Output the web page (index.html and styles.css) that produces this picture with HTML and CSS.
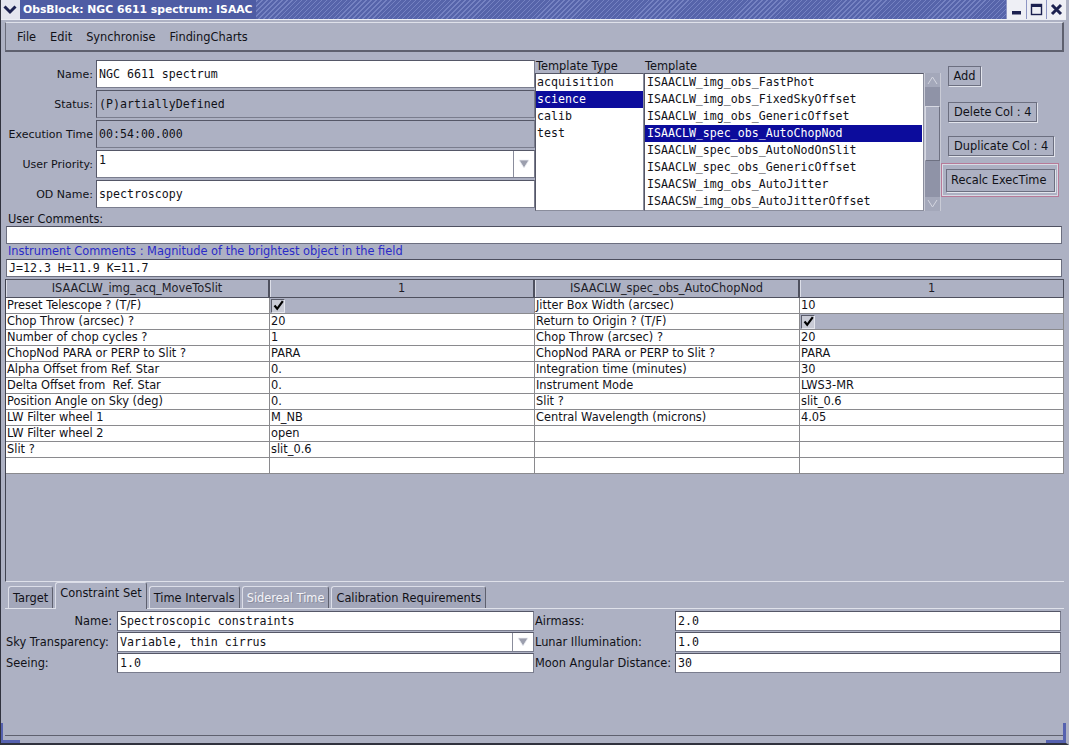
FILE: index.html
```html
<!DOCTYPE html>
<html>
<head>
<meta charset="utf-8">
<title>ObsBlock: NGC 6611 spectrum: ISAAC</title>
<link rel="stylesheet" href="styles.css">
</head>
<body>
<div class="win">
  <div class="titlebar">
    <div class="wm-menu">
      <svg width="20" height="19" viewBox="0 0 20 19"><polyline points="4.5,6.5 10,12 15.5,6.5" fill="none" stroke="#1c2150" stroke-width="3"/></svg>
    </div>
    <div class="title">ObsBlock: NGC 6611 spectrum: ISAAC</div>
    <div class="title-fill"></div>
    <div class="wbtn">
      <svg width="19" height="19" viewBox="0 0 19 19"><rect x="5" y="11" width="9" height="3.5" fill="#1c2150"/></svg>
    </div>
    <div class="wbtn">
      <svg width="19" height="19" viewBox="0 0 19 19"><rect x="4.5" y="4.5" width="10" height="10" fill="none" stroke="#1c2150" stroke-width="1.4"/><rect x="4" y="4" width="11" height="3" fill="#1c2150"/></svg>
    </div>
    <div class="wbtn">
      <svg width="19" height="19" viewBox="0 0 19 19"><path d="M5 5 L14 14 M14 5 L5 14" stroke="#1c2150" stroke-width="3"/></svg>
    </div>
  </div>

  <div class="frame">
    <div class="menubar">
      <span>File</span><span>Edit</span><span>Synchronise</span><span>FindingCharts</span>
    </div>

    <div class="top">
      <div class="obform">
        <div class="row"><div class="lbl">Name:</div><div class="fld">NGC 6611 spectrum</div></div>
        <div class="row"><div class="lbl">Status:</div><div class="fld ro">(P)artiallyDefined</div></div>
        <div class="row"><div class="lbl">Execution Time</div><div class="fld ro">00:54:00.000</div></div>
        <div class="row"><div class="lbl">User Priority:</div>
          <div class="fld combo top-text"><span class="cval">1</span><span class="arrow"><svg width="12" height="10" viewBox="0 0 12 10"><path d="M1 1 L11 1 L6 9 Z" fill="#9c9fae" stroke="#eeeff4" stroke-width="0.8"/></svg></span></div>
        </div>
        <div class="row"><div class="lbl">OD Name:</div><div class="fld">spectroscopy</div></div>
      </div>

      <div class="ttype">
        <div class="collbl">Template Type</div>
        <div class="list">
          <div class="item">acquisition</div>
          <div class="item sel">science</div>
          <div class="item">calib</div>
          <div class="item">test</div>
        </div>
      </div>

      <div class="tmpl">
        <div class="collbl">Template</div>
        <div class="tmpl-body">
          <div class="list wide">
            <div class="item">ISAACLW_img_obs_FastPhot</div>
            <div class="item">ISAACLW_img_obs_FixedSkyOffset</div>
            <div class="item">ISAACLW_img_obs_GenericOffset</div>
            <div class="item sel">ISAACLW_spec_obs_AutoChopNod</div>
            <div class="item">ISAACLW_spec_obs_AutoNodOnSlit</div>
            <div class="item">ISAACLW_spec_obs_GenericOffset</div>
            <div class="item">ISAACSW_img_obs_AutoJitter</div>
            <div class="item">ISAACSW_img_obs_AutoJitterOffset</div>
          </div>
          <div class="vscroll">
            <div class="sarrow"><svg width="15" height="12" viewBox="0 0 15 12"><path d="M3 10 L7.5 3 L12 10" fill="none" stroke="#d4d6e0" stroke-width="1"/></svg></div>
            <div class="strack">
              <div class="sthumb"></div>
            </div>
            <div class="sarrow"><svg width="15" height="12" viewBox="0 0 15 12"><path d="M3 2 L7.5 9 L12 2" fill="none" stroke="#d4d6e0" stroke-width="1"/></svg></div>
          </div>
        </div>
      </div>

      <div class="btns">
        <div class="btn b-add">Add</div>
        <div class="btn b-del">Delete Col : 4</div>
        <div class="btn b-dup">Duplicate Col : 4</div>
        <div class="focus"><div class="btn b-rec">Recalc ExecTime</div></div>
      </div>
    </div>

    <div class="clbl">User Comments:</div>
    <div class="tf"></div>
    <div class="clbl blue">Instrument Comments : Magnitude of the brightest object in the field</div>
    <div class="tf">J=12.3 H=11.9 K=11.7</div>

    <div class="tblwrap">
      <div class="grid">
        <div class="th">ISAACLW_img_acq_MoveToSlit</div>
        <div class="th">1</div>
        <div class="th">ISAACLW_spec_obs_AutoChopNod</div>
        <div class="th last">1</div>

        <div class="td">Preset Telescope ? (T/F)</div><div class="td chk"><span class="cb"><svg width="11" height="11" viewBox="0 0 11 11"><path d="M1.5 5.5 L4.2 8.8 L9.8 1.2" fill="none" stroke="#000" stroke-width="2.2"/></svg></span></div>
        <div class="td">Jitter Box Width (arcsec)</div><div class="td">10</div>

        <div class="td">Chop Throw (arcsec) ?</div><div class="td">20</div>
        <div class="td">Return to Origin ? (T/F)</div><div class="td chk"><span class="cb"><svg width="11" height="11" viewBox="0 0 11 11"><path d="M1.5 5.5 L4.2 8.8 L9.8 1.2" fill="none" stroke="#000" stroke-width="2.2"/></svg></span></div>

        <div class="td">Number of chop cycles ?</div><div class="td">1</div>
        <div class="td">Chop Throw (arcsec) ?</div><div class="td">20</div>

        <div class="td">ChopNod PARA or PERP to Slit ?</div><div class="td">PARA</div>
        <div class="td">ChopNod PARA or PERP to Slit ?</div><div class="td">PARA</div>

        <div class="td">Alpha Offset from Ref. Star</div><div class="td">0.</div>
        <div class="td">Integration time (minutes)</div><div class="td">30</div>

        <div class="td">Delta Offset from  Ref. Star</div><div class="td">0.</div>
        <div class="td">Instrument Mode</div><div class="td">LWS3-MR</div>

        <div class="td">Position Angle on Sky (deg)</div><div class="td">0.</div>
        <div class="td">Slit ?</div><div class="td">slit_0.6</div>

        <div class="td">LW Filter wheel 1</div><div class="td">M_NB</div>
        <div class="td">Central Wavelength (microns)</div><div class="td">4.05</div>

        <div class="td">LW Filter wheel 2</div><div class="td">open</div>
        <div class="td"></div><div class="td"></div>

        <div class="td">Slit ?</div><div class="td">slit_0.6</div>
        <div class="td"></div><div class="td"></div>

        <div class="td"></div><div class="td"></div>
        <div class="td"></div><div class="td"></div>
      </div>
    </div>

    <div class="tabs">
      <div class="tab">Target</div>
      <div class="tab active">Constraint Set</div>
      <div class="tab">Time Intervals</div>
      <div class="tab disabled">Sidereal Time</div>
      <div class="tab">Calibration Requirements</div>
    </div>
    <div class="tabpanel">
      <div class="cform">
        <div class="crow"><div class="clab right">Name:</div><div class="cf">Spectroscopic constraints</div></div>
        <div class="crow"><div class="clab">Sky Transparency:</div>
          <div class="cf combo"><span class="cval">Variable, thin cirrus</span><span class="arrow"><svg width="12" height="10" viewBox="0 0 12 10"><path d="M1 1 L11 1 L6 9 Z" fill="#9c9fae" stroke="#eeeff4" stroke-width="0.8"/></svg></span></div>
        </div>
        <div class="crow"><div class="clab">Seeing:</div><div class="cf">1.0</div></div>
      </div>
      <div class="cform second">
        <div class="crow"><div class="clab">Airmass:</div><div class="cf">2.0</div></div>
        <div class="crow"><div class="clab">Lunar Illumination:</div><div class="cf">1.0</div></div>
        <div class="crow"><div class="clab">Moon Angular Distance:</div><div class="cf">30</div></div>
      </div>
    </div>
  </div>
  <div class="corner left"></div>
  <div class="corner right"></div>
</div>
</body>
</html>
```
FILE: styles.css
```css
* { box-sizing: border-box; }

body {
  margin: 0;
  background: #adb1c3;
}

.win {
  position: relative;
  width: 1069px;
  height: 745px;
  overflow: hidden;
  display: flex;
  flex-direction: column;
  background: #adb1c3;
  border-left: 1px solid #30323e;
  border-right: 3px solid #adb1c3;
  border-bottom: 2px solid #30323e;
  font-family: "DejaVu Sans", sans-serif;
  font-size: 11.4px;
  color: #111118;
}

/* ---- window title bar ---- */
.titlebar {
  height: 20px;
  flex: none;
  display: flex;
  background: repeating-linear-gradient(135deg, #5664aa 0 2.5px, #7582c2 2.5px 3.5px);
  border-bottom: 1px solid #eceef4;
}
.wm-menu {
  width: 20px;
  margin-left: -1px;
  background: #e4e5ee;
  display: flex;
  align-items: center;
  justify-content: center;
}
.title {
  background: #4e5ca4;
  color: #fff;
  font-weight: bold;
  font-size: 10.8px;
  line-height: 20px;
  padding: 0 3px 0 3px;
}
.title-fill { flex: 1; }
.wbtn {
  width: 20px;
  background: #eeeff5;
  border-left: 1px solid #8d95c4;
  display: flex;
  align-items: center;
  justify-content: center;
}

/* ---- frame contents ---- */
.frame {
  flex: 1;
  display: flex;
  flex-direction: column;
  padding: 1px 0 0 4px;
  width: 1063px;
}

.menubar {
  height: 30px;
  flex: none;
  margin-top: 1px;
  display: flex;
  align-items: center;
  gap: 14px;
  padding-left: 11px;
  border-top: 1px solid #dfe1ea;
  border-left: 1px solid #6a6c7a;
  border-bottom: 2px solid #5e606e;
  border-right: 2px solid #5e606e;
}

.top {
  height: 155px;
  flex: none;
  margin-top: 4px;
  display: flex;
}

.obform {
  width: 530px;
  padding-top: 4px;
  display: flex;
  flex-direction: column;
  gap: 2px;
}
.row {
  display: flex;
  align-items: center;
  height: 28px;
}
.lbl {
  width: 91px;
  text-align: right;
  padding-right: 3px;
  white-space: nowrap;
  font-size: 11px;
}
.fld {
  flex: 1;
  height: 28px;
  display: flex;
  align-items: center;
  padding-left: 2px;
  background: #fff;
  border: 1px solid #7a7d8e;
  border-top-color: #555767;
  border-left-color: #555767;
  font-family: "DejaVu Sans Mono", monospace;
  font-size: 11.6px;
  white-space: pre;
}
.fld.ro { background: #adb1c3; }
.combo { padding-right: 0; }
.combo .cval { flex: 1; }
.top-text { align-items: flex-start; }
.top-text .cval { padding-top: 2px; }
.arrow {
  width: 21px;
  align-self: stretch;
  display: flex;
  align-items: center;
  justify-content: center;
  border-left: 1px solid #8a8d9c;
  background: #fff;
}

.ttype { width: 109px; display: flex; flex-direction: column; }
.tmpl { width: 297px; display: flex; flex-direction: column; }
.collbl {
  height: 17px;
  line-height: 20px;
  padding-left: 1px;
  white-space: nowrap;
}
.list {
  flex: 1;
  background: #fff;
  border-top: 1px solid #555767;
  border-left: 1px solid #555767;
  border-right: 1px solid #8a8d9c;
  border-bottom: 1px solid #8a8d9c;
  font-family: "DejaVu Sans Mono", monospace;
  font-size: 11.6px;
  overflow: hidden;
}
.item {
  height: 17px;
  line-height: 17px;
  padding-left: 1px;
  white-space: nowrap;
}
.list.wide .item { padding-left: 2px; margin-right: 1px; }
.item.sel {
  background: #0c0c9c;
  color: #fff;
}
.tmpl-body { flex: 1; display: flex; }
.tmpl-body .list { width: 280px; flex: none; }

.vscroll {
  width: 17px;
  display: flex;
  flex-direction: column;
  background: #8f93a7;
  border-left: 1px solid #c9cbd6;
  border-right: 1px solid #c9cbd6;
}
.sarrow {
  height: 14px;
  display: flex;
  align-items: center;
  justify-content: center;
  background: #a4a8ba;
}
.strack {
  flex: 1;
  padding-top: 19px;
}
.sthumb {
  height: 55px;
  background: #a9adbf;
  border: 1px solid #d6d8e2;
  border-right-color: #6e7182;
  border-bottom-color: #6e7182;
}

.btns {
  flex: 1;
  padding-top: 10px;
  display: flex;
  flex-direction: column;
  align-items: flex-start;
}
.btn {
  height: 20px;
  line-height: 18px;
  padding: 0 5px;
  margin-left: 7px;
  border: 1px solid #6c6f80;
  box-shadow: 1px 1px 0 #e2e4ec;
  white-space: nowrap;
}
.b-add { margin-bottom: 16px; padding: 0 4.5px; }
.b-del { margin-bottom: 14px; }
.b-dup { margin-bottom: 7px; }
.focus {
  width: 118px;
  height: 34px;
  border: 1px solid #b77a98;
  padding: 5px 3px 0 4px;
  box-shadow: inset 0 0 0 1px #d8dae4;
}
.b-rec {
  margin-left: 0;
  height: 23px;
  line-height: 21px;
  width: 109px;
  padding: 0 4px;
}

.clbl {
  height: 15px;
  line-height: 17px;
  padding-left: 3px;
  white-space: nowrap;
}
.clbl.blue { color: #2a2ac8; height: 14px; line-height: 12px; margin-top: 1px; }
.tf {
  height: 18px;
  margin: 0 2px 0 1px;
  background: #fff;
  border: 1px solid #6c6f80;
  border-top-color: #4e5060;
  padding-left: 2px;
  line-height: 16px;
  font-family: "DejaVu Sans Mono", monospace;
  font-size: 11.6px;
}

/* ---- parameter table ---- */
.tblwrap {
  margin-top: 2px;
  height: 303px;
  flex: none;
  border-left: 1px solid #404250;
  border-bottom: 1px solid #dfe1ea;
}
.grid {
  display: grid;
  grid-template-columns: 264px 265px 265px 264px;
  grid-template-rows: 19px repeat(11, 16px);
}
.th {
  line-height: 16px;
  text-align: center;
  background: #adb1c3;
  border-top: 1px solid #4e505e;
  border-bottom: 1px solid #4e505e;
  border-right: 2px solid #4e505e;
  box-shadow: inset 1px 0 0 #dcdee8;
  color: #1d1d28;
  white-space: nowrap;
}
.th.last { border-right-width: 1px; }
.td {
  line-height: 15px;
  background: #fff;
  border-right: 1px solid #8a8a8e;
  border-bottom: 1px solid #8a8a8e;
  padding-left: 1px;
  white-space: pre;
  overflow: hidden;
}
.td.chk {
  background: #adb1c3;
  display: flex;
  align-items: center;
}
.cb {
  width: 14px;
  height: 14px;
  border: 1px solid #5a5c6a;
  border-right-color: #e4e6ee;
  border-bottom-color: #e4e6ee;
  background: #c9cbd6;
  display: flex;
  align-items: center;
  justify-content: center;
}

/* ---- tabs ---- */
.tabs {
  height: 26px;
  flex: none;
  display: flex;
  align-items: flex-end;
  gap: 2px;
  padding-left: 3px;
  position: relative;
  z-index: 1;
}
.tab {
  height: 22px;
  line-height: 22px;
  padding: 0 4px;
  background: #a3a7ba;
  border: 1px solid #dcdee8;
  border-right-color: #5e606e;
  border-bottom: none;
  border-radius: 3px 3px 0 0;
  white-space: nowrap;
}
.tab.active {
  height: 27px;
  line-height: 20px;
  margin-bottom: -1px;
  background: #adb1c3;
}
.tab.disabled {
  color: #f4f4f8;
  text-shadow: 1px 1px 0 #8a8d9e;
}

.tabpanel {
  height: 128px;
  flex: none;
  display: flex;
  padding-top: 2px;
  border-top: 1px solid #dfe1ea;
  border-bottom: 1px solid #5e606e;
}
.cform {
  width: 529px;
  display: flex;
  flex-direction: column;
  gap: 1px;
}
.crow {
  height: 20px;
  display: flex;
  align-items: center;
}
.clab {
  width: 112px;
  padding-left: 1px;
  white-space: nowrap;
}
.clab.right { text-align: right; padding-right: 5px; }
.second .clab { width: 141px; }
.cf {
  flex: 1;
  height: 20px;
  display: flex;
  align-items: center;
  padding-left: 2px;
  background: #fff;
  border: 1px solid #7a7d8e;
  border-top-color: #555767;
  border-left-color: #555767;
  font-family: "DejaVu Sans Mono", monospace;
  font-size: 11.6px;
  white-space: pre;
}
.second .cf { margin-right: 2px; }

/* resize handles in the window corners */
.corner {
  position: absolute;
  bottom: 0;
  width: 20px;
  height: 20px;
  border-bottom: 3px solid #5662b0;
}
.corner.left { left: -1px; border-left: 3px solid #5662b0; }
.corner.right { right: 0; border-right: 3px solid #5662b0; }
```
